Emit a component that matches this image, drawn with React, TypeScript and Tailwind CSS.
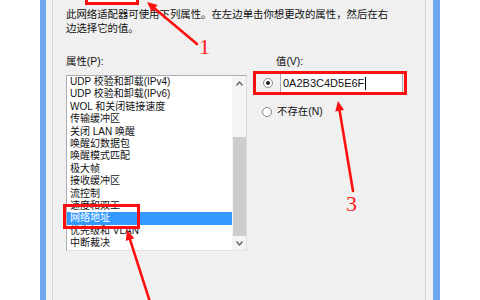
import React from "react";

const items = [
  "UDP 校验和卸载(IPv4)",
  "UDP 校验和卸载(IPv6)",
  "WOL 和关闭链接速度",
  "传输缓冲区",
  "关闭 LAN 唤醒",
  "唤醒幻数据包",
  "唤醒模式匹配",
  "极大帧",
  "接收缓冲区",
  "流控制",
  "速度和双工",
  "网络地址",
  "优先级和 VLAN",
  "中断裁决",
];

const font = { fontFamily: '"Liberation Sans", "Noto Sans CJK SC", sans-serif' };

// arrow with a filled head at (x2, y2)
const Arrow = ({ x1, y1, x2, y2 }: { x1: number; y1: number; x2: number; y2: number }) => {
  const len = Math.hypot(x2 - x1, y2 - y1);
  const dx = (x2 - x1) / len;
  const dy = (y2 - y1) / len;
  const bx = x2 - dx * 10;
  const by = y2 - dy * 10;
  const pts = `${x2},${y2} ${bx - dy * 4.5},${by + dx * 4.5} ${bx + dy * 4.5},${by - dx * 4.5}`;
  return (
    <g>
      <line x1={x1} y1={y1} x2={bx} y2={by} stroke="#ff1010" strokeWidth={2.6} strokeLinecap="round" />
      <polygon points={pts} fill="#ff1010" />
    </g>
  );
};

export default function App() {
  return (
    <div className="relative w-[480px] h-[300px] overflow-hidden bg-white text-[#111]" style={font}>
      {/* WINDOW */}
      <div className="ml-[40px] w-[400px] h-full border-l-[6px] border-r-[7px] border-[#6ea7ee] bg-[#f2f2f2] pl-[6px] pr-[7px]">
        <div className="h-full border-x border-[#d6d6d6] bg-[#f0f0f0] pl-[13px] pt-[8px]">
          <p className="w-[340px] whitespace-nowrap text-[10.4px] leading-[14px]">
            此网络适配器可使用下列属性。在左边单击你想更改的属性，然后在右
            <br />
            边选择它的值。
          </p>
          <div className="mt-[19px] flex">
            {/* LEFT */}
            <div className="w-[181px]">
              <div className="text-[10.4px] leading-[14px]">属性(P):</div>
              <div className="mt-[6px] flex h-[176px] border border-[#abadb3] border-r-[#dcdcdc] border-b-[#e3e3e3] bg-white">
                <ul className="flex-1 text-[10px] leading-[12.4px]">
                  {items.map((it) => (
                    <li
                      key={it}
                      className={
                        it === "网络地址"
                          ? "bg-[#3399ff] pl-[3px] text-white"
                          : "pl-[3px] whitespace-nowrap"
                      }
                    >
                      {it}
                    </li>
                  ))}
                </ul>
                {/* SCROLLBAR */}
                <div className="flex w-[14px] flex-col items-center bg-[#f4f4f4] text-[#606060]">
                  <div className="flex h-[14px] items-center">
                    <svg width="7" height="5" viewBox="0 0 7 5">
                      <path d="M0.5 4.5 L3.5 1 L6.5 4.5" fill="none" stroke="#606060" strokeWidth="1.3" />
                    </svg>
                  </div>
                  <div className="mt-[47px] h-[99px] w-[13px] bg-[#cdcdcd]" />
                  <div className="flex flex-1 items-center">
                    <svg width="7" height="5" viewBox="0 0 7 5">
                      <path d="M0.5 0.5 L3.5 4 L6.5 0.5" fill="none" stroke="#606060" strokeWidth="1.3" />
                    </svg>
                  </div>
                </div>
              </div>
            </div>
            {/* RIGHT */}
            <div className="ml-[16px] w-[141px]">
              <div className="pl-[13px] text-[10.4px] leading-[14px]">值(V):</div>
              <div className="mt-[4px] flex h-[20px] items-center">
                <span className="flex h-[10px] w-[10px] items-center justify-center rounded-full border border-[#8c8c8c] bg-white">
                  <span className="h-[4px] w-[4px] rounded-full bg-[#222]" />
                </span>
                <div className="ml-[7px] flex h-[20px] w-[123px] items-center border border-[#abadb3] bg-white pl-[2px] text-[11px]">
                  <span>0A2B3C4D5E6F</span>
                  <span className="ml-[1px] h-[13px] w-px bg-black" />
                </div>
              </div>
              <div className="mt-[12px] flex h-[14px] items-center">
                <span className="ml-[-1px] h-[10px] w-[10px] rounded-full border border-[#8c8c8c] bg-white" />
                <span className="ml-[5px] text-[10.4px]">不存在(N)</span>
              </div>
            </div>
          </div>
        </div>
      </div>

      {/* ANNOTATIONS */}
      <div className="absolute left-[85px] top-[-20px] h-[25px] w-[54px] border-[3px] border-[#ff1010] bg-white" />
      <div className="absolute left-[253px] top-[71px] h-[24px] w-[154px] border-[3px] border-[#ff1010]" />
      <div className="absolute left-[63px] top-[204px] h-[25px] w-[77px] border-[3px] border-[#ff1010]" />
      <svg className="absolute left-0 top-0" width="480" height="300" viewBox="0 0 480 300">
        <Arrow x1={197} y1={44} x2={147} y2={2} />
        <Arrow x1={150} y1={302} x2={127} y2={230} />
        <Arrow x1={353} y1={191} x2={338} y2={101} />
      </svg>
      <span
        className="absolute left-[199px] top-[36px] text-[22px] leading-[22px] text-[#ff1a1a]"
        style={{ fontFamily: '"Liberation Serif", serif' }}
      >
        1
      </span>
      <span
        className="absolute left-[346px] top-[193px] text-[22px] leading-[22px] text-[#ff1a1a]"
        style={{ fontFamily: '"Liberation Serif", serif' }}
      >
        3
      </span>
    </div>
  );
}
